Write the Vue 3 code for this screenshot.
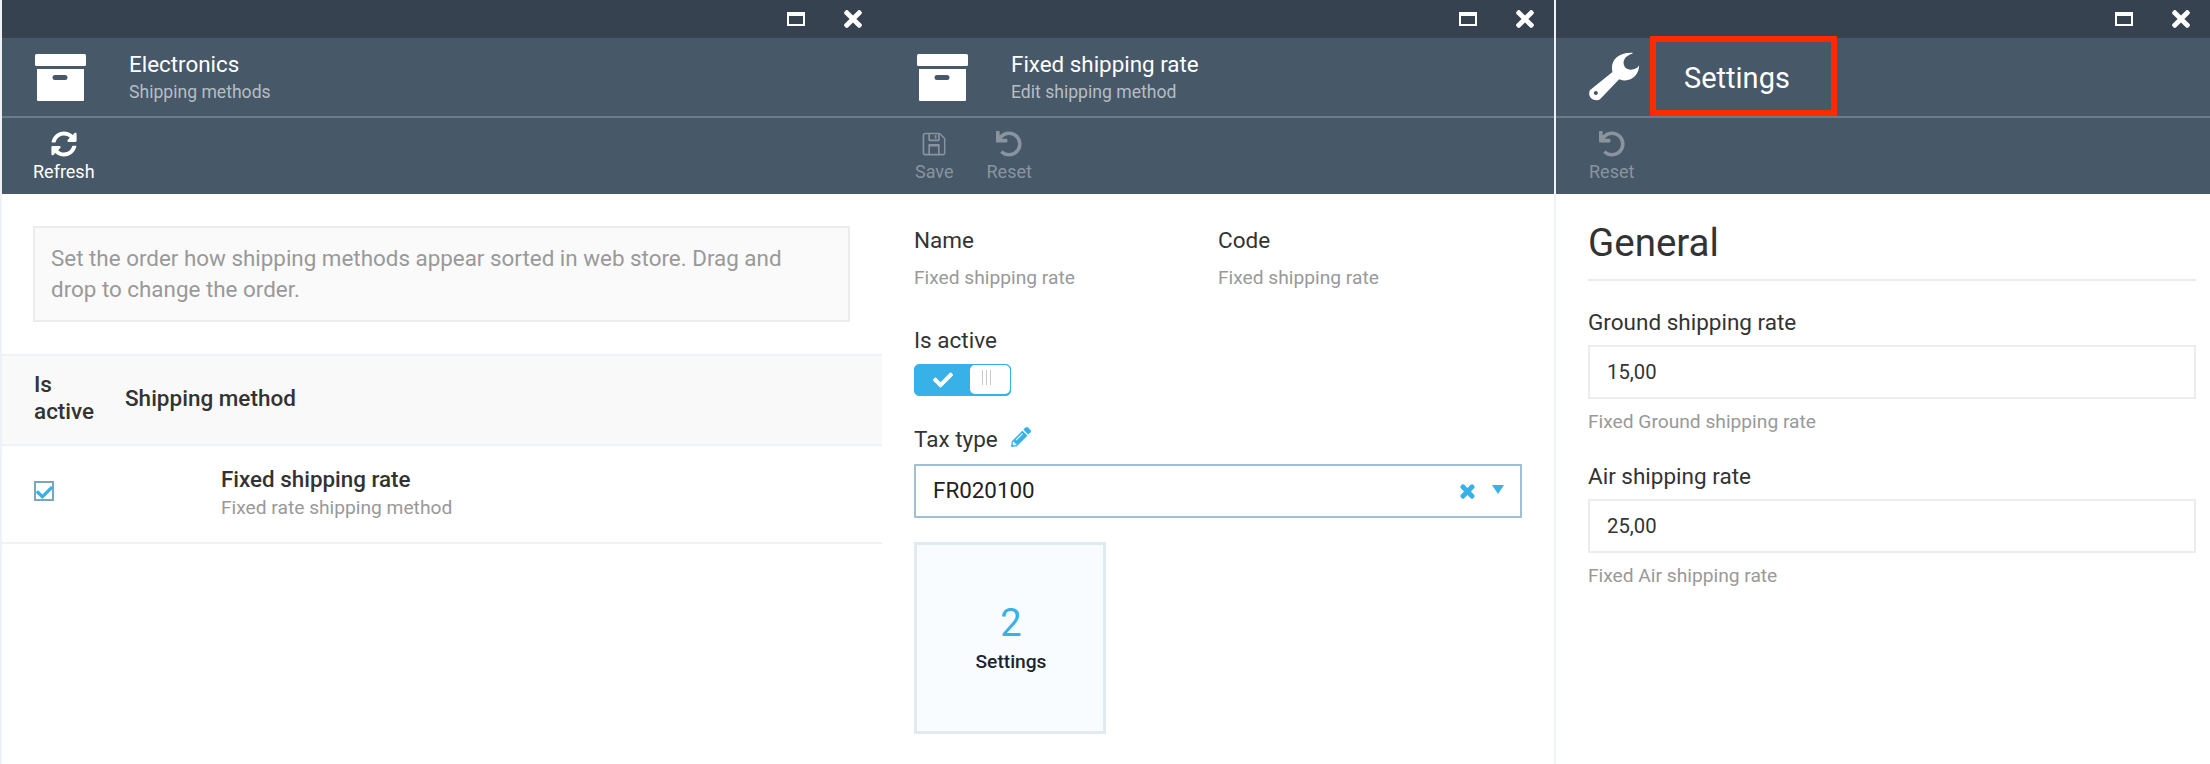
<script setup>
const icons = {
  refresh: 'M370.72 133.28C339.458 104.008 298.888 87.962 255.848 88c-77.458.068-144.328 53.178-162.791 126.85-1.344 5.363-6.122 9.15-11.651 9.15H24.103c-7.498 0-13.194-6.807-11.807-14.176C33.933 94.924 134.813 8 256 8c66.448 0 126.791 26.136 171.315 68.685L463.03 40.97C478.149 25.851 504 36.559 504 57.941V192c0 13.255-10.745 24-24 24H345.941c-21.382 0-32.09-25.851-16.971-40.971l41.75-41.749zM32 296h134.059c21.382 0 32.09 25.851 16.971 40.971l-41.75 41.75c31.262 29.273 71.835 45.319 114.876 45.28 77.418-.07 144.315-53.144 162.787-126.849 1.344-5.363 6.122-9.15 11.651-9.15h57.304c7.498 0 13.194 6.807 11.807 14.176C478.067 417.076 377.187 504 256 504c-66.448 0-126.791-26.136-171.315-68.685L48.97 471.03C33.851 486.149 8 475.441 8 454.059V320c0-13.255 10.745-24 24-24z',
  undo: 'M212.333 224.333H12c-6.627 0-12-5.373-12-12V12C0 5.373 5.373 0 12 0h48c6.627 0 12 5.373 12 12v78.112C117.773 39.279 184.26 7.47 258.175 8.007c136.906.994 246.448 111.623 246.157 248.532C504.041 393.258 393.12 504 256.333 504c-64.089 0-122.496-24.313-166.51-64.215-5.099-4.622-5.334-12.554-.467-17.42l33.967-33.967c4.474-4.474 11.662-4.717 16.401-.525C170.76 415.336 211.58 432 256.333 432c97.268 0 176-78.716 176-176 0-97.267-78.716-176-176-176-58.496 0-110.28 28.476-142.274 72.333h98.274c6.627 0 12 5.373 12 12v48c0 6.627-5.373 12-12 12z',
  wrench: 'M30 155L98 100C90 70 110 40 158 42L158 45C135 50 125 70 135 85C145 98 170 95 178 80C178 110 150 135 118 122L62 180C50 192 20 180 30 155ZM48 157a6 6 0 1 0 .01 0Z',
  check: 'M173.898 439.404l-166.4-166.4c-9.997-9.997-9.997-26.206 0-36.204l36.203-36.204c9.997-9.998 26.206-9.998 36.204 0L192 312.69 432.095 72.596c9.997-9.997 26.206-9.997 36.204 0l36.203 36.204c9.997 9.997 9.997 26.206 0 36.204l-294.4 294.401c-9.998 9.997-26.207 9.997-36.204-.001z',
  pencil: 'M497.9 142.1l-46.1 46.1c-4.7 4.7-12.3 4.7-17 0l-111-111c-4.7-4.7-4.7-12.3 0-17l46.1-46.1c18.7-18.7 49.1-18.7 67.9 0l60.1 60.1c18.8 18.7 18.8 49.1 0 67.9zM284.2 99.8L21.6 362.4.4 483.9c-2.9 16.4 11.4 30.6 27.8 27.8l121.5-21.3 262.6-262.6c4.7-4.7 4.7-12.3 0-17l-111-111c-4.8-4.7-12.4-4.7-17.1 0zM124.1 339.9c-5.5-5.5-5.5-14.3 0-19.8l154-154c5.5-5.5 14.3-5.5 19.8 0s5.5 14.3 0 19.8l-154 154c-5.5 5.5-14.3 5.5-19.8 0zM88 424h48v36.3l-64.5 11.3-31.1-31.1L51.7 376H88v48z',
  times: 'M242.72 256l100.07-100.07c12.28-12.28 12.28-32.19 0-44.48l-22.24-22.24c-12.28-12.28-32.19-12.28-44.48 0L176 189.28 75.93 89.21c-12.28-12.28-32.19-12.28-44.48 0L9.21 111.45c-12.28 12.28-12.28 32.19 0 44.48L109.28 256 9.21 356.07c-12.28 12.28-12.28 32.19 0 44.48l22.24 22.24c12.28 12.28 32.2 12.28 44.48 0L176 322.72l100.07 100.07c12.28 12.28 32.2 12.28 44.48 0l22.24-22.24c12.28-12.28 12.28-32.19 0-44.48L242.72 256z',
  save: 'M433.9 129.9l-83.9-83.8A48 48 0 0 0 316.1 32H48C21.5 32 0 53.5 0 80v352c0 26.5 21.5 48 48 48h352c26.5 0 48-21.5 48-48V163.9a48 48 0 0 0-14.1-34zM304 64v104H144V64h160zm96 384H48c-8.8 0-16-7.2-16-16V80c0-8.800 7.200-16 16-16h64v112c0 13.300 10.700 24 24 24h176c13.300 0 24-10.700 24-24V67.900l79.300 79.300c3 3 4.700 7.100 4.700 11.300V432c0 8.800-7.200 16-16 16zM112 272v176h32V304h160v144h32V272c0-8.800-7.200-16-16-16H128c-8.800 0-16 7.200-16 16zM240 80h32v72h-32z'
}
</script>

<template>
  <div class="app">
    <section class="blade blade-first">
      <div class="titlebar">
        <span class="win-max"></span>
        <svg class="win-close" viewBox="0 0 352 512"><path :d="icons.times" /></svg>
      </div>
      <header class="head">
        <svg class="box" viewBox="0 0 51 47">
          <rect x="0" y="0" width="51" height="12" rx="1.500" />
          <path fill-rule="evenodd" d="M2 15h47v31a1 1 0 0 1-1 1H3a1 1 0 0 1-1-1zM20 21a1.500 1.500 0 0 0 0 5h10a1.500 1.500 0 0 0 0-5z" />
        </svg>
        <div class="head-text">
          <div class="head-title">Electronics</div>
          <div class="head-sub">Shipping methods</div>
        </div>
      </header>
      <div class="toolbar">
        <div class="tool tool-refresh">
          <svg class="tool-icon" viewBox="0 0 512 512"><path :d="icons.refresh" /></svg>
          <span>Refresh</span>
        </div>
      </div>
      <div class="body-first">
        <div class="notice">Set the order how shipping methods appear sorted in web store. Drag and drop to change the order.</div>
        <div class="table-head">
          <div class="col-active">Is active</div>
          <div>Shipping method</div>
        </div>
        <div class="table-row">
          <div class="checkbox">
            <svg viewBox="0 0 512 512"><path :d="icons.check" /></svg>
          </div>
          <div class="row-text">
            <div class="row-title">Fixed shipping rate</div>
            <div class="row-sub">Fixed rate shipping method</div>
          </div>
        </div>
      </div>
    </section>

    <section class="blade blade-second">
      <div class="titlebar">
        <span class="win-max"></span>
        <svg class="win-close" viewBox="0 0 352 512"><path :d="icons.times" /></svg>
      </div>
      <header class="head">
        <svg class="box" viewBox="0 0 51 47">
          <rect x="0" y="0" width="51" height="12" rx="1.500" />
          <path fill-rule="evenodd" d="M2 15h47v31a1 1 0 0 1-1 1H3a1 1 0 0 1-1-1zM20 21a1.500 1.500 0 0 0 0 5h10a1.500 1.500 0 0 0 0-5z" />
        </svg>
        <div class="head-text">
          <div class="head-title">Fixed shipping rate</div>
          <div class="head-sub">Edit shipping method</div>
        </div>
      </header>
      <div class="toolbar">
        <div class="tool disabled">
          <svg class="tool-icon" viewBox="0 0 448 512"><path :d="icons.save" /></svg>
          <span>Save</span>
        </div>
        <div class="tool disabled">
          <svg class="tool-icon" viewBox="0 0 512 512"><path :d="icons.undo" /></svg>
          <span>Reset</span>
        </div>
      </div>
      <div class="body-second">
        <div class="two-cols">
          <div class="col">
            <div class="label">Name</div>
            <div class="value">Fixed shipping rate</div>
          </div>
          <div class="col">
            <div class="label">Code</div>
            <div class="value">Fixed shipping rate</div>
          </div>
        </div>
        <div class="label label-active">Is active</div>
        <div class="toggle">
          <div class="toggle-on">
            <svg viewBox="0 0 512 512"><path :d="icons.check" /></svg>
          </div>
          <div class="toggle-knob"><i></i><i></i><i></i></div>
        </div>
        <div class="label label-tax">
          Tax type
          <svg class="pencil" viewBox="0 0 512 512"><path :d="icons.pencil" /></svg>
        </div>
        <div class="select">
          <span class="select-value">FR020100</span>
          <svg class="select-clear" viewBox="0 0 352 512"><path :d="icons.times" /></svg>
          <span class="select-arrow"></span>
        </div>
        <div class="tile">
          <div class="tile-count">2</div>
          <div class="tile-name">Settings</div>
        </div>
      </div>
    </section>

    <section class="blade blade-third">
      <div class="titlebar">
        <span class="win-max"></span>
        <svg class="win-close" viewBox="0 0 352 512"><path :d="icons.times" /></svg>
      </div>
      <header class="head head-third">
        <svg class="wrench" viewBox="28 40 152 150"><path fill-rule="evenodd" :d="icons.wrench" /></svg>
        <div class="title-mark">Settings</div>
      </header>
      <div class="toolbar">
        <div class="tool disabled">
          <svg class="tool-icon" viewBox="0 0 512 512"><path :d="icons.undo" /></svg>
          <span>Reset</span>
        </div>
      </div>
      <div class="body-third">
        <h2 class="section-title">General</h2>
        <div class="field">
          <div class="label">Ground shipping rate</div>
          <div class="input">15,00</div>
          <div class="hint">Fixed Ground shipping rate</div>
        </div>
        <div class="field">
          <div class="label">Air shipping rate</div>
          <div class="input">25,00</div>
          <div class="hint">Fixed Air shipping rate</div>
        </div>
      </div>
    </section>
  </div>
</template>

<style scoped>
.app {
  display: flex;
  width: 2210px;
  height: 764px;
  overflow: hidden;
  background: #fff;
  font-family: Roboto, "Liberation Sans", sans-serif;
  color: #333;
}
.blade { display: flex; flex-direction: column; flex: none; min-width: 0; }
.blade-first { width: 882px; border-left: 2px solid #eef1f5; box-sizing: border-box; }
.blade-second { width: 674px; border-right: 2px solid #eef1f5; box-sizing: border-box; }
.blade-third { width: 654px; }

.titlebar {
  height: 38px;
  flex: none;
  background: #36424f;
  display: flex;
  align-items: center;
  justify-content: flex-end;
  padding-right: 20px;
  gap: 39px;
}
.win-max {
  width: 18px;
  height: 14px;
  box-sizing: border-box;
  border: 2px solid #fff;
  border-top-width: 4px;
}
.win-close { width: 18px; height: 26px; fill: #fff; }

.head {
  height: 78px;
  flex: none;
  background: #475868;
  border-bottom: 2px solid #6a7b89;
  display: flex;
  align-items: center;
  padding-left: 33px;
  gap: 43px;
}
.blade-second .head { padding-left: 35px; gap: 43px; }
.box { width: 51px; height: 47px; fill: #fff; flex: none; }
.wrench { width: 51px; height: 50px; fill: #fff; flex: none; }
.head-title { font-size: 22.400px; line-height: 26px; color: #fff; }
.head-sub { font-size: 17.600px; line-height: 22px; margin-top: 4px; color: #b6bdc4; }
.head-text { margin-top: -1px; }
.head-third { position: relative; }
.title-mark {
  font-size: 29px;
  color: #fff;
  box-sizing: border-box;
  height: 80px;
  width: 187px;
  margin: -4px 0 -2px -33px;
  padding-left: 28px;
  padding-top: 4px;
  display: flex;
  align-items: center;
  border: 6px solid #ff2a00;
}

.toolbar {
  height: 76px;
  flex: none;
  background: #475868;
  display: flex;
  padding-left: 33px;
  gap: 33px;
}
.tool {
  display: flex;
  flex-direction: column;
  align-items: center;
  padding-top: 13px;
  font-size: 18px;
  line-height: 21px;
  color: #fff;
}
.tool-refresh { margin-left: -2px; }
.tool-icon { width: 26px; height: 26px; fill: #fff; margin-bottom: 4px; }
.tool.disabled { color: #89949f; }
.tool.disabled .tool-icon { fill: #89949f; }

.body-first { flex: 1; }
.notice {
  margin: 32px 32px 32px 31px;
  height: 96px;
  box-sizing: border-box;
  padding: 15px 28px 15px 16px;
  background: #fafafa;
  border: 2px solid #ececec;
  font-size: 22.400px;
  line-height: 31px;
  color: #999;
}
.table-head {
  height: 92px;
  box-sizing: border-box;
  background: #f9f9f9;
  border-top: 2px solid #eef1f5;
  border-bottom: 2px solid #eef1f5;
  display: flex;
  align-items: center;
  padding-left: 32px;
  padding-bottom: 4px;
  font-size: 22.500px;
  font-weight: 500;
  line-height: 27px;
  gap: 31px;
}
.col-active { width: 60px; }
.table-row {
  height: 98px;
  box-sizing: border-box;
  border-bottom: 2px solid #eef1f5;
  display: flex;
  align-items: center;
  padding-left: 32px;
}
.checkbox {
  width: 20px;
  height: 20px;
  box-sizing: border-box;
  border: 2px solid #7ba6c0;
  display: flex;
  align-items: center;
  justify-content: center;
  margin-top: -6px;
}
.checkbox svg { width: 17px; height: 17px; fill: #38b0e8; margin-top: 3px; flex: none; }
.row-text { margin-left: 167px; margin-top: -2px; }
.row-title { font-size: 22.400px; font-weight: 500; line-height: 26px; }
.row-sub { font-size: 19.200px; line-height: 26px; margin-top: 3px; color: #999; }

.body-second { flex: 1; padding: 0 32px 0 32px; }
.two-cols { display: flex; padding-top: 33px; }
.col { width: 305px; }
.label { font-size: 22.500px; line-height: 26px; color: #333; }
.value { font-size: 19.200px; line-height: 24px; color: #999; margin-top: 13px; }
.label-active { margin-top: 37px; }
.toggle {
  width: 97px;
  height: 32px;
  margin-top: 11px;
  background: #38b0e8;
  border-radius: 5px;
  display: flex;
  overflow: hidden;
  box-sizing: border-box;
  border: 1px solid #38b0e8;
}
.toggle-on { width: 55px; display: flex; align-items: center; justify-content: center; }
.toggle-on svg { width: 20px; height: 20px; fill: #fff; }
.toggle-knob {
  flex: 1;
  background: #fff;
  border-radius: 5px;
  display: flex;
  justify-content: center;
  gap: 3px;
  padding: 5px 8px 0 0;
  height: 29px;
  box-sizing: border-box;
}
.toggle-knob i { width: 1px; height: 15px; background: #c9c9c9; }
.label-tax { margin-top: 30px; display: flex; align-items: center; gap: 13px; }
.pencil { width: 20px; height: 20px; fill: #38b0e8; margin-top: -5px; }
.select {
  margin-top: 12px;
  height: 54px;
  box-sizing: border-box;
  border: 2px solid #9fc1d3;
  display: flex;
  align-items: center;
  padding-left: 17px;
  padding-bottom: 2px;
  font-size: 22.400px;
  color: #222;
}
.select-value { flex: 1; }
.select-clear {
  width: 13px;
  height: 19px;
  fill: #38b0e8;
  stroke: #38b0e8;
  stroke-width: 36;
  margin-right: 18px;
  margin-top: 2px;
  overflow: visible;
}
.select-arrow {
  width: 0;
  height: 0;
  border-left: 6px solid transparent;
  border-right: 6px solid transparent;
  border-top: 9px solid #38b0e8;
  margin-right: 16px;
  margin-top: -2px;
}
.tile {
  margin-top: 24px;
  width: 192px;
  height: 192px;
  box-sizing: border-box;
  border: 3px solid #dfeaf1;
  background: #f8fcff;
  display: flex;
  flex-direction: column;
  align-items: center;
  padding: 54px 0 0 2px;
}
.tile-count { font-size: 38px; line-height: 48px; color: #38b0e8; }
.tile-name { font-size: 19.200px; font-weight: 500; line-height: 26px; margin-top: 2px; color: #1a2530; }

.body-third { flex: 1; padding: 0 14px 0 32px; }
.section-title {
  margin: 0;
  padding-top: 28px;
  height: 87px;
  box-sizing: border-box;
  border-bottom: 2px solid #e8ecef;
  font-size: 38.500px;
  line-height: 42px;
  font-weight: 400;
  color: #333;
}
.field { margin-top: 28px; }
.field + .field { margin-top: 29px; }
.input {
  margin-top: 10px;
  height: 54px;
  box-sizing: border-box;
  border: 2px solid #ececec;
  display: flex;
  align-items: center;
  padding-left: 17px;
  font-size: 20.250px;
  color: #333;
}
.hint { font-size: 19.200px; line-height: 24px; color: #999; margin-top: 11px; }
</style>
